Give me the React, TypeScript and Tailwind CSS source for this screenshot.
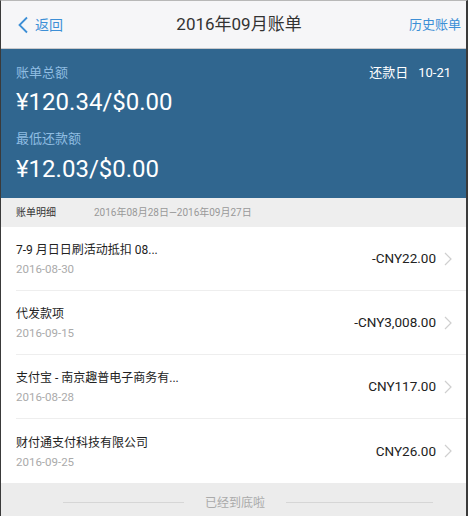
const font = { fontFamily: 'Roboto, "Noto Sans CJK SC", sans-serif' };

type Bill = { title: string; date: string; amount: string };

const bills: Bill[] = [
  { title: "7-9 月日日刷活动抵扣 08...", date: "2016-08-30", amount: "-CNY22.00" },
  { title: "代发款项", date: "2016-09-15", amount: "-CNY3,008.00" },
  { title: "支付宝 - 南京趣普电子商务有...", date: "2016-08-28", amount: "CNY117.00" },
  { title: "财付通支付科技有限公司", date: "2016-09-25", amount: "CNY26.00" },
];

function Chevron() {
  return (
    <svg width="8" height="14" viewBox="0 0 8 14" fill="none" className="shrink-0">
      <path d="M1 1l6 6-6 6" stroke="#cfcfcf" strokeWidth="1.2" />
    </svg>
  );
}

export default function App() {
  return (
    <div
      style={font}
      className="flex h-[516px] w-[468px] flex-col overflow-hidden border-t border-l border-r-2 border-t-[#b8b8b8] border-l-[#3a3a3a] border-r-[#3a3a3a] bg-white"
    >
      {/* nav */}
      <div className="flex h-[48px] shrink-0 items-center justify-between border-b border-[#c9c9cc] bg-[#f6f6f8] pl-[16px] pr-[5px]">
        <div className="flex w-[90px] items-center gap-[6px] text-[#3d8fd6]">
          <svg width="12" height="18" viewBox="0 0 12 18" fill="none">
            <path d="M10 1.5L2.5 9l7.5 7.5" stroke="#3d8fd6" strokeWidth="1.8" />
          </svg>
          <span className="text-[14px] leading-none">返回</span>
        </div>
        <div className="text-[17px] leading-none text-[#333]">2016年09月账单</div>
        <div className="w-[90px] text-right text-[13px] leading-none text-[#3d8fd6]">历史账单</div>
      </div>

      {/* summary */}
      <div className="shrink-0 bg-[#30668f] px-[15px] pt-[14px] pb-[13px]">
        <div className="flex items-center justify-between leading-[20px]">
          <span className="text-[13px] text-[#8fbde2]">账单总额</span>
          <span className="text-[13px] text-white">
            还款日<span className="ml-[10px]">10-21</span>
          </span>
        </div>
        <div className="mt-[3px] text-[24px] leading-[32px] text-white">¥120.34/$0.00</div>
        <div className="mt-[11px] text-[13px] leading-[20px] text-[#8fbde2]">最低还款额</div>
        <div className="mt-[4px] text-[24px] leading-[32px] text-white">¥12.03/$0.00</div>
      </div>

      {/* section header */}
      <div className="flex h-[29px] shrink-0 items-center bg-[#eeeeee] px-[15px] text-[10px]">
        <span className="w-[78px] text-[#333]">账单明细</span>
        <span className="text-[#999]">2016年08月28日—2016年09月27日</span>
      </div>

      {/* bills */}
      <div className="shrink-0">
        {bills.map((bill, index) => (
          <div key={bill.date} className="pl-[15px]">
            <div
              className={`flex h-[64px] items-center pr-[14px] ${
                index < bills.length - 1 ? "border-b border-[#eeeeee]" : ""
              }`}
            >
              <div className="flex-1 pt-[2px]">
                <div className="text-[12px] leading-[18px] text-[#222]">{bill.title}</div>
                <div className="mt-[1px] text-[11.5px] leading-[18px] text-[#aaaaaa]">{bill.date}</div>
              </div>
              <span className="mr-[8px] text-[13.5px] text-[#222]">{bill.amount}</span>
              <Chevron />
            </div>
          </div>
        ))}
      </div>

      {/* footer */}
      <div className="flex flex-1 items-center gap-[20px] bg-[#ececec] pl-[62px] pt-[6px]">
        <div className="h-px w-[121px] bg-[#d6d6d6]" />
        <span className="w-[62px] whitespace-nowrap text-center text-[12px] leading-none text-[#aaaaaa]">
          已经到底啦
        </span>
        <div className="h-px w-[147px] bg-[#d6d6d6]" />
      </div>
    </div>
  );
}
